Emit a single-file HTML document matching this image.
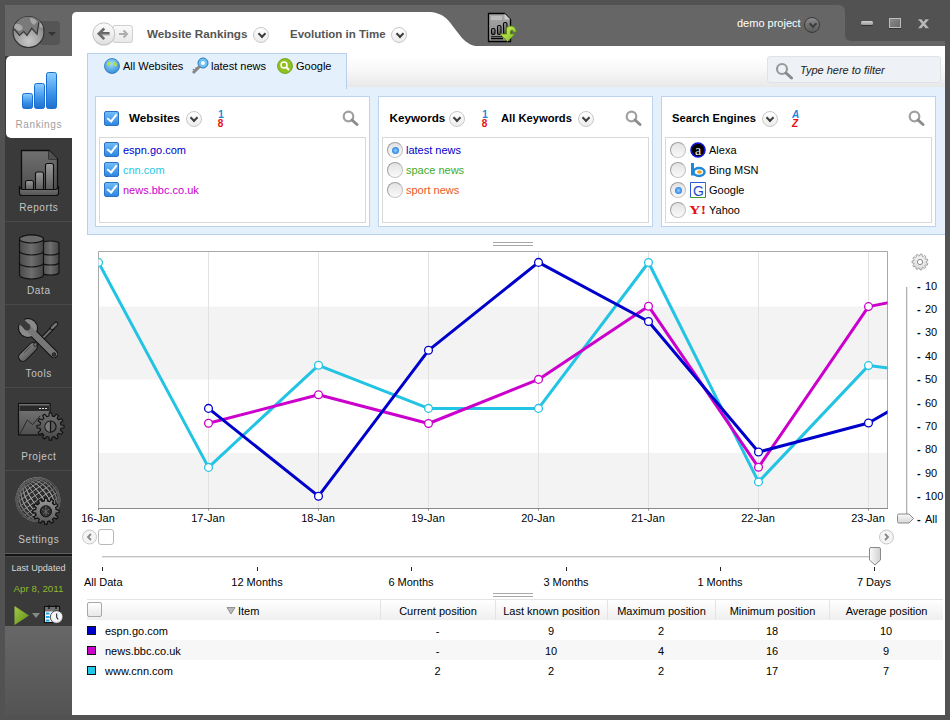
<!DOCTYPE html>
<html><head><meta charset="utf-8">
<style>
*{box-sizing:border-box;margin:0;padding:0}
html,body{width:950px;height:720px;overflow:hidden;background:#525252;font-family:"Liberation Sans",sans-serif;font-size:11px;color:#000}
.a{position:absolute}
.t{position:absolute;white-space:nowrap;line-height:14px}
.b{font-weight:bold}
.dd{position:absolute;width:16px;height:16px;border-radius:50%;border:1px solid #c8c8c8;background:linear-gradient(#fff,#ececec)}
.dd:after{content:"";position:absolute;left:4.6px;top:3px;width:4px;height:4px;border-right:2.2px solid #3e3e3e;border-bottom:2.2px solid #3e3e3e;transform:rotate(45deg)}
.side{position:absolute;left:5px;width:67px;text-align:center;color:#c4c4c4;font-size:10px;letter-spacing:0.6px;line-height:14px;text-indent:0.6px}
.sep{position:absolute;left:5px;width:67px;height:1px;background:#4a4a4a}
.panel{position:absolute;top:96px;height:131px;background:#fff;border:1px solid #bcd2ee}
.list{position:absolute;background:#fff;border:1px solid #d8d8d8}
.cb{position:absolute;width:15px;height:15px;border-radius:2px;background:linear-gradient(#72bdf8,#2d86e0);border:1px solid #2a72c8}
.cb:after{content:"";position:absolute;left:3.6px;top:0.2px;width:4px;height:8px;border-right:2.6px solid #fff;border-bottom:2.3px solid #fff;transform:rotate(38deg)}
.rb{position:absolute;width:16px;height:16px;border-radius:50%;border:1px solid #a0a0a0;border-bottom-color:#c8c8c8;border-right-color:#c0c0c0;background:linear-gradient(#e2e2e2,#fafafa)}
.rb.on:after{content:"";position:absolute;left:3.5px;top:3.5px;width:7px;height:7px;border-radius:50%;background:radial-gradient(circle,#9ad0ff 0,#3a8ee8 60%,#2f7fd8 100%)}
.srch{position:absolute}
.ylab{position:absolute;left:917px;font-weight:normal;font-size:11px;line-height:12px;white-space:nowrap}
.xlab{position:absolute;top:512px;font-size:11px;line-height:12px;white-space:nowrap;transform:translateX(-50%)}
.th{position:absolute;top:600px;height:20px;line-height:22px;text-align:center;font-size:11px;border-left:1px solid #e4e4e4}
.td{position:absolute;height:20px;line-height:22px;text-align:center;font-size:11px}
</style></head><body>
<!-- top gray bar -->
<div class="a" style="left:5px;top:5px;width:840px;height:51px;background:#666;border-top-right-radius:6px"></div>
<div class="a" style="left:840px;top:30px;width:105px;height:26px;background:#666"></div>
<div class="a" style="left:845px;top:5px;width:105px;height:36px;background:#525252;border-bottom-left-radius:6px"></div>
<!-- sidebar -->
<div class="a" style="left:5px;top:56px;width:67px;height:570px;background:#3a3a3a"></div>
<div class="a" style="left:5px;top:626px;width:67px;height:89px;background:linear-gradient(#676767,#545454)"></div>
<!-- main white panel -->
<div class="a" style="left:72px;top:46px;width:873px;height:669px;background:#fff"></div>
<svg class="a" style="left:0;top:0" width="950" height="60">
<path d="M72,47 L72,17 Q72,12 77,12 L427,12 C444,12 448,20 455,29 C462,38 467,47 484,47 Z" fill="#fff"/>
</svg>
<!-- header nav -->
<svg class="a" style="left:88px;top:18px" width="50" height="32" viewBox="88 18 50 32">
<defs>
<linearGradient id="gb" x1="0" y1="0" x2="0" y2="1"><stop offset="0" stop-color="#fdfdfd"/><stop offset="1" stop-color="#e0e0e0"/></linearGradient>
<linearGradient id="gf" x1="0" y1="0" x2="0" y2="1"><stop offset="0" stop-color="#fafafa"/><stop offset="1" stop-color="#e8e8e8"/></linearGradient>
<linearGradient id="garr" x1="0" y1="0" x2="0" y2="1"><stop offset="0" stop-color="#4a4a4a"/><stop offset="1" stop-color="#9a9a9a"/></linearGradient>
</defs>
<rect x="112.5" y="25.5" width="20" height="17" rx="2.5" fill="url(#gf)" stroke="#cfcfcf"/>
<path d="M119,34 h7.5 M123.5,30.5 l3.5,3.5 l-3.5,3.5" stroke="#adadad" stroke-width="2" fill="none"/>
<circle cx="103.8" cy="34.6" r="11" fill="#b0b0b0" opacity="0.6"/>
<circle cx="103.8" cy="33.8" r="11" fill="url(#gb)" stroke="#c4c4c4" stroke-width="1"/>
<path d="M99,33 h10.6" stroke="#3e3e3e" stroke-width="1.6"/><path d="M99,34.6 h10.6" stroke="#9a9a9a" stroke-width="1.6"/>
<path d="M104.3,28.5 l-5.5,5.3 l5.5,5.3" stroke="#6a6a6a" stroke-width="2.6" fill="none"/>
</svg>
<div class="t b" style="left:147px;top:27px;font-size:11.7px;color:#555">Website Rankings</div>
<div class="dd" style="left:253px;top:27px"></div>
<div class="t b" style="left:290px;top:27px;font-size:11.5px;color:#555">Evolution in Time</div>
<div class="dd" style="left:391px;top:27px"></div>
<!-- report download icon -->
<svg class="a" style="left:480px;top:8px" width="45" height="40">
<defs><linearGradient id="gr" x1="0" y1="0" x2="0" y2="1"><stop offset="0" stop-color="#a8a8a8"/><stop offset="1" stop-color="#8a8a8a"/></linearGradient>
<linearGradient id="grb" x1="0" y1="0" x2="0" y2="1"><stop offset="0" stop-color="#9a9a9a"/><stop offset="1" stop-color="#4a4a4a"/></linearGradient>
<linearGradient id="gg" x1="0" y1="0" x2="1" y2="1"><stop offset="0" stop-color="#d8f870"/><stop offset="1" stop-color="#7ab81a"/></linearGradient></defs>
<path d="M8.5,5.5 h16 l6,6 v22 h-22 z" fill="url(#gr)" stroke="#000" stroke-width="1.3"/>
<path d="M24.5,5.5 l6,6 h-6 z" fill="#ccc"/>
<rect x="11" y="8" width="11" height="4" fill="#bdbdbd"/>
<rect x="11.5" y="20.5" width="3.5" height="6" rx="1.5" fill="url(#grb)" stroke="#000" stroke-width="1.1"/>
<rect x="17.5" y="17.5" width="3.5" height="9" rx="1.5" fill="url(#grb)" stroke="#000" stroke-width="1.1"/>
<rect x="23.5" y="14.5" width="3.5" height="12" rx="1.5" fill="url(#grb)" stroke="#000" stroke-width="1.1"/>
<path d="M11,28.7 h14 M11,30.6 h12" stroke="#000" stroke-width="1.1"/>
<path d="M26.5,26 v-5 q0,-3 4,-3 q4,0 5,3 l1,3 h-3 l-1,-2 q-2,0 -2,2 v2 h4.5 l-7.5,7.5 l-7.5,-7.5 z" fill="url(#gg)" stroke="#5a8a10" stroke-width="0.8"/>
</svg>
<!-- demo project -->
<div class="t" style="left:737px;top:16px;font-size:11px;color:#fff">demo project</div>
<div class="dd" style="left:804px;top:17px;border-color:#3a3a3a;background:linear-gradient(#8a8a8a,#5a5a5a)"></div>
<!-- window controls -->
<div class="a" style="left:861px;top:21px;width:12px;height:4px;border-radius:1.5px;background:linear-gradient(#d0d0d0,#9a9a9a);box-shadow:0 1px 0 #333"></div>
<div class="a" style="left:889px;top:18px;width:12px;height:10px;background:linear-gradient(135deg,#8a8a8a,#6a6a6a);border:1px solid #bdbdbd;box-shadow:0 1px 0 #333"></div>
<svg class="a" style="left:916px;top:17px" width="15" height="14"><path d="M1.5,2 h4 l2,2.5 l2,-2.5 h4 l-4,4.8 l4,4.8 h-4 l-2,-2.5 l-2,2.5 h-4 l4,-4.8 z" fill="#b8b8b8" stroke="#3a3a3a" stroke-width="0.4"/></svg>
<!-- logo -->
<div class="a" style="left:39px;top:21px;width:21px;height:24px;border-radius:4px;background:#555"></div>
<div class="a" style="left:48px;top:32px;width:0;height:0;border-left:4.5px solid transparent;border-right:4.5px solid transparent;border-top:4.5px solid #333"></div>
<svg class="a" style="left:11px;top:15px" width="36" height="36">
<defs><radialGradient id="glb" cx="0.5" cy="0.8" r="0.6"><stop offset="0" stop-color="#c8c8c8"/><stop offset="1" stop-color="#8a8a8a"/></radialGradient>
<clipPath id="gclip"><circle cx="17.5" cy="17" r="15.3"/></clipPath></defs>
<circle cx="17.5" cy="17" r="15.5" fill="url(#glb)" stroke="#333" stroke-width="1.2"/>
<g clip-path="url(#gclip)">
<path d="M0,0 H36 V10 L28,6.5 L26,19.1 L20.7,13.4 L16,20.4 L12.8,16.6 L8.4,20.4 L3.3,14 L0,14 Z" fill="#7a7a7a"/>
<path d="M2,10 q5,-3 9,1 q2,4 -3,5 q-4,-1 -6,-6 z M19,3 q5,0 7,4 l-3,3 q-4,-2 -4,-7 z M27,4 q6,2 8,10 l-6,-2 z" fill="#a8a8a8"/>
<path d="M3.3,14 L8.4,20.4 L12.8,16.6 L16,20.4 L20.7,13.4 L26,19.1 L28,6.5" fill="none" stroke="#3a3a3a" stroke-width="1.3"/>
</g>
</svg>
<!-- toolbar strip -->
<div class="a" style="left:347px;top:53px;width:598px;height:34px;background:linear-gradient(#fff 10%,#f8f8f8 50%,#e8e8e8)"></div>
<!-- blue container -->
<div class="a" style="left:87px;top:87px;width:858px;height:148px;background:#e4f0fc;border:1px solid #b9cfee;border-right:0;border-top-color:#e4f0fc"></div>
<div class="a" style="left:87px;top:53px;width:260px;height:36px;background:#e4f0fc;border:1px solid #b9cfee;border-bottom:0;border-radius:1px 1px 0 0"></div>
<!-- filter box -->
<div class="a" style="left:767px;top:56px;width:174px;height:27px;background:#eef1f5;border:1px solid #dfe3e8;border-radius:3px"></div>
<svg class="a" style="left:775px;top:62px" width="20" height="18"><circle cx="7" cy="7" r="5" fill="none" stroke="#9a9a9a" stroke-width="2.2"/><path d="M11,11 L16.5,16" stroke="#8a8a8a" stroke-width="3" stroke-linecap="round"/></svg>
<div class="t" style="left:800px;top:63px;font-style:italic;font-size:11px;color:#222">Type here to filter</div>
<!-- tab items -->
<svg class="a" style="left:104px;top:58px" width="16" height="16"><defs><radialGradient id="gl" cx="0.45" cy="0.35" r="0.7"><stop offset="0" stop-color="#9fe0ff"/><stop offset="1" stop-color="#2e86d4"/></radialGradient></defs><circle cx="8" cy="8" r="7.5" fill="url(#gl)" stroke="#2a74b8" stroke-width="0.8"/><path d="M3,5 q2,-2 4,0 q-1,3 -3,3 z M9,3 q4,1 4,5 q-2,1 -3,-1 z" fill="#b6e23a"/></svg>
<div class="t" style="left:123px;top:59px;font-size:11px">All Websites</div>
<svg class="a" style="left:191px;top:57px" width="18" height="18"><circle cx="12" cy="6" r="5" fill="#6cc3f5" stroke="#2c78b8"/><circle cx="12" cy="6" r="2" fill="#fff"/><path d="M9,9 L2,16" stroke="#888" stroke-width="3"/><path d="M4,14 l-2,-2 M6,12 l-1.5,-1.5" stroke="#888" stroke-width="1.5"/></svg>
<div class="t" style="left:211px;top:59px;font-size:11px">latest news</div>
<svg class="a" style="left:277px;top:58px" width="16" height="16"><circle cx="8" cy="8" r="7.5" fill="#8fc21e" stroke="#6a9a14" stroke-width="0.8"/><circle cx="7" cy="7" r="3" fill="none" stroke="#fff" stroke-width="1.5"/><path d="M9,9 l3,3" stroke="#fff" stroke-width="2"/></svg>
<div class="t" style="left:296px;top:59px;font-size:11px">Google</div>

<!-- panels -->
<div class="panel" style="left:95px;width:275px"></div>
<div class="list" style="left:99px;top:137px;width:267px;height:86px"></div>
<div class="panel" style="left:378px;width:275px"></div>
<div class="list" style="left:382px;top:137px;width:267px;height:86px"></div>
<div class="panel" style="left:661px;width:275px"></div>
<div class="list" style="left:665px;top:137px;width:267px;height:86px"></div>

<!-- sort icon svg defs -->
<svg width="0" height="0" style="position:absolute">
<defs>
<g id="mag"><circle cx="6.5" cy="6.5" r="4.8" fill="none" stroke="#a0a0a0" stroke-width="2.2"/><path d="M10,10 L15,14.5" stroke="#8c8c8c" stroke-width="3" stroke-linecap="round"/></g>
</defs></svg>

<!-- Websites panel -->
<div class="cb" style="left:104px;top:111px"></div>
<div class="t b" style="left:129px;top:111px;font-size:11.7px">Websites</div>
<div class="dd" style="left:185.5px;top:111px"></div>
<div class="t b" style="left:216px;top:109.5px;font-size:10px;line-height:10px;color:#1a86e0;width:8px;text-align:center;margin-left:1px">1</div>
<div class="t b" style="left:216px;top:118.5px;font-size:10px;line-height:10px;color:#e81010;width:8px;text-align:center;margin-left:0.5px">8</div>
<svg class="a" style="left:341.5px;top:110px" width="18" height="17"><use href="#mag"/></svg>
<div class="cb" style="left:104px;top:142px"></div>
<div class="t" style="left:123px;top:143px;color:#0000cc">espn.go.com</div>
<div class="cb" style="left:104px;top:162px"></div>
<div class="t" style="left:123px;top:163px;color:#22c8e2">cnn.com</div>
<div class="cb" style="left:104px;top:182px"></div>
<div class="t" style="left:123px;top:183px;color:#cc00cc">news.bbc.co.uk</div>

<!-- Keywords panel -->
<div class="t b" style="left:389.5px;top:111px;font-size:11.7px">Keywords</div>
<div class="dd" style="left:448.5px;top:111px"></div>
<div class="t b" style="left:480px;top:109.5px;font-size:10px;line-height:10px;color:#1a86e0;width:8px;text-align:center;margin-left:1px">1</div>
<div class="t b" style="left:480px;top:118.5px;font-size:10px;line-height:10px;color:#e81010;width:8px;text-align:center;margin-left:0.5px">8</div>
<div class="t b" style="left:501px;top:111px;font-size:11.2px">All Keywords</div>
<div class="dd" style="left:577.5px;top:111px"></div>
<svg class="a" style="left:624.5px;top:110px" width="18" height="17"><use href="#mag"/></svg>
<div class="rb on" style="left:387px;top:142px"></div>
<div class="t" style="left:406px;top:143px;color:#0000cc">latest news</div>
<div class="rb" style="left:387px;top:162px"></div>
<div class="t" style="left:406px;top:163px;color:#3eab2a">space news</div>
<div class="rb" style="left:387px;top:182px"></div>
<div class="t" style="left:406px;top:183px;color:#e8581e">sport news</div>

<!-- Search Engines panel -->
<div class="t b" style="left:672px;top:111px;font-size:11.2px">Search Engines</div>
<div class="dd" style="left:761.5px;top:111px"></div>
<div class="t b" style="left:792px;top:109.5px;font-size:10px;line-height:10px;color:#1a86e0;font-style:italic">A</div>
<div class="t b" style="left:792px;top:118.5px;font-size:10px;line-height:10px;color:#e81010;font-style:italic">Z</div>
<svg class="a" style="left:907.5px;top:110px" width="18" height="17"><use href="#mag"/></svg>
<div class="rb" style="left:670px;top:142px"></div>
<div class="rb" style="left:670px;top:162px"></div>
<div class="rb on" style="left:670px;top:182px"></div>
<div class="rb" style="left:670px;top:202px"></div>
<svg class="a" style="left:690px;top:142px" width="16" height="16"><circle cx="8" cy="8" r="7" fill="#000" stroke="#1414d8" stroke-width="1.6"/><text x="8" y="12.5" font-family="Liberation Serif" font-size="14" fill="#eee" text-anchor="middle">a</text></svg>
<div class="t" style="left:709px;top:143px">Alexa</div>
<svg class="a" style="left:690px;top:162px" width="16" height="16"><path d="M2.5,1 v12.5" stroke="#1e88d8" stroke-width="3"/><ellipse cx="9" cy="10" rx="5.5" ry="4" fill="none" stroke="#1e88d8" stroke-width="2.5"/><ellipse cx="9.5" cy="10" rx="2.5" ry="1.8" fill="#f7a11a"/></svg>
<div class="t" style="left:709px;top:163px">Bing MSN</div>
<svg class="a" style="left:690px;top:182px" width="16" height="16"><rect x="0.5" y="0.5" width="15" height="15" fill="#fff"/><path d="M0.5,15.5 V0.5 H15.5" stroke="#2a5ad8" fill="none"/><path d="M15.5,0.5 V15.5" stroke="#e03a2a"/><path d="M0.5,15.5 H15.5" stroke="#3aa02a"/><text x="8.5" y="13.5" font-family="Liberation Sans" font-size="14" fill="#1a4ec8" text-anchor="middle">G</text></svg>
<div class="t" style="left:709px;top:183px">Google</div>
<svg class="a" style="left:689px;top:203px" width="19" height="14"><text x="0" y="11" font-family="Liberation Serif" font-size="12" font-weight="bold" fill="#e0141a" textLength="17" lengthAdjust="spacingAndGlyphs">Y!</text></svg>
<div class="t" style="left:709px;top:203px">Yahoo</div>

<!-- sidebar items -->
<div class="a" style="left:6px;top:56px;width:66px;height:82px;background:#fff;border-radius:5px 0 0 5px"></div>
<svg class="a" style="left:20px;top:70px" width="40" height="40">
<defs><linearGradient id="gbar" x1="0" y1="0" x2="0" y2="1"><stop offset="0" stop-color="#8fd0ff"/><stop offset="0.6" stop-color="#3a92e8"/><stop offset="1" stop-color="#1d6fd0"/></linearGradient></defs>
<rect x="2.5" y="23.5" width="10" height="15" rx="2" fill="url(#gbar)" stroke="#1a6ed0"/>
<rect x="14.5" y="13.5" width="10" height="25" rx="2" fill="url(#gbar)" stroke="#1a6ed0"/>
<rect x="26.5" y="2.5" width="10" height="36" rx="2" fill="url(#gbar)" stroke="#1a6ed0"/>
</svg>
<div class="side" style="top:118px;color:#a0a0a0">Rankings</div>

<div class="sep" style="top:221px"></div>
<div class="sep" style="top:304px"></div>
<div class="sep" style="top:387px"></div>
<div class="sep" style="top:470px"></div>
<div class="a" style="left:5px;top:553px;width:67px;height:1px;background:#606060"></div><div class="a" style="left:5px;top:554px;width:67px;height:2px;background:#151515"></div><div class="a" style="left:5px;top:556px;width:67px;height:1px;background:#4a4a4a"></div>

<svg class="a" style="left:0;top:140px" width="72" height="60" viewBox="0 140 72 60">
<defs><linearGradient id="gdoc" x1="0" y1="0" x2="0" y2="1"><stop offset="0" stop-color="#707070"/><stop offset="1" stop-color="#4e4e4e"/></linearGradient>
<linearGradient id="gbr" x1="0" y1="0" x2="0" y2="1"><stop offset="0" stop-color="#9a9a9a"/><stop offset="1" stop-color="#5a5a5a"/></linearGradient>
<linearGradient id="gtray" x1="0" y1="0" x2="0" y2="1"><stop offset="0" stop-color="#7a7a7a"/><stop offset="1" stop-color="#555"/></linearGradient></defs>
<path d="M21.5,150.5 h27.5 l8.5,8.5 v31 h-36 z" fill="url(#gdoc)" stroke="#0e0e0e" stroke-width="1.3"/>
<path d="M49,150.5 v8.5 h8.5" fill="#444" stroke="#0e0e0e" stroke-width="1.1"/>
<path d="M49,150.5 l8.5,8.5 h-8.5 z" fill="#505050"/>
<rect x="25.5" y="180.5" width="8" height="10" rx="2" fill="url(#gbr)" stroke="#0e0e0e" stroke-width="1.1"/>
<rect x="35.5" y="172" width="8" height="18.5" rx="2" fill="url(#gbr)" stroke="#0e0e0e" stroke-width="1.1"/>
<rect x="45.5" y="163.5" width="8" height="27" rx="2" fill="url(#gbr)" stroke="#0e0e0e" stroke-width="1.1"/>
<path d="M19.5,186 q0,3 3,3.5 h33 q3,-0.5 3,-3.5 v7 a2.5,2.5 0 0 1 -2.5,2.5 h-34 a2.5,2.5 0 0 1 -2.5,-2.5 z" fill="url(#gtray)" stroke="#0e0e0e" stroke-width="1.2"/>
</svg>
<div class="side" style="top:201px">Reports</div>

<svg class="a" style="left:18px;top:233px" width="44" height="48">
<defs><linearGradient id="gdb" x1="0" y1="0" x2="1" y2="0"><stop offset="0" stop-color="#4a4a4a"/><stop offset="0.5" stop-color="#6e6e6e"/><stop offset="1" stop-color="#444"/></linearGradient></defs>
<g stroke="#111" stroke-width="1.1">
<g transform="translate(0,2)"><path d="M24,8 a9,3 0 0 1 17,0 v30 a9,3 0 0 1 -17,0 z" fill="url(#gdb)"/>
<path d="M24,18 a9,3 0 0 0 17,0 M24,28 a9,3 0 0 0 17,0" fill="none"/></g><g transform="translate(0,1)">
<path d="M1.5,5 a12,4 0 0 1 24,0 v36 a12,4 0 0 1 -24,0 z" fill="url(#gdb)"/>
<ellipse cx="13.5" cy="5" rx="12" ry="4" fill="#6a6a6a"/>
<path d="M1.5,17 a12,4 0 0 0 24,0 M1.5,29 a12,4 0 0 0 24,0" fill="none"/>
</g></g>
</svg>
<div class="side" style="top:284px">Data</div>

<svg class="a" style="left:14px;top:314px" width="50" height="50">
<defs>
<mask id="jaw"><rect width="50" height="50" fill="#fff"/><path d="M4,4 L12.5,12.5" stroke="#000" stroke-width="6.5" stroke-linecap="butt"/><circle cx="13" cy="13" r="3.4" fill="#000"/></mask>
<linearGradient id="gtl" x1="0" y1="0" x2="1" y2="1"><stop offset="0" stop-color="#8a8a8a"/><stop offset="1" stop-color="#555"/></linearGradient>
</defs>
<g stroke-linecap="round">
<path d="M26,27 L39,13.5" stroke="#111" stroke-width="4"/>
<path d="M26,27 L39,13.5" stroke="#6a6a6a" stroke-width="2.2"/>
<path d="M38,14 L42,10" stroke="#111" stroke-width="4.5"/>
<path d="M38,14 L42,10" stroke="#777" stroke-width="2.5"/>
<path d="M9,43 L19,33" stroke="#111" stroke-width="9.5"/>
<path d="M9,43 L19,33" stroke="url(#gtl)" stroke-width="7.5"/>
<path d="M10.5,38.5 L16.5,32.5" stroke="#4a4a4a" stroke-width="1"/>
<circle cx="21.5" cy="30.5" r="1.8" fill="#777" stroke="#111" stroke-width="0.8"/>
</g>
<g mask="url(#jaw)">
<circle cx="14" cy="14" r="10" fill="#111"/>
<path d="M16,16 L40,40" stroke="#111" stroke-width="8.5" stroke-linecap="round"/>
<circle cx="14" cy="14" r="9" fill="#8a8a8a"/>
<path d="M16,16 L40,40" stroke="#777" stroke-width="6.5" stroke-linecap="round"/>
</g>
<circle cx="40" cy="40.5" r="1.8" fill="#3a3a3a" stroke="#111" stroke-width="0.8"/>
</svg>
<div class="side" style="top:367px">Tools</div>

<svg class="a" style="left:0;top:396px" width="72" height="50" viewBox="0 396 72 50">
<defs><linearGradient id="gwin" x1="0" y1="0" x2="0" y2="1"><stop offset="0" stop-color="#7a7a7a"/><stop offset="1" stop-color="#4e4e4e"/></linearGradient>
<linearGradient id="ggr" x1="0" y1="0" x2="0" y2="1"><stop offset="0" stop-color="#6e6e6e"/><stop offset="1" stop-color="#4a4a4a"/></linearGradient></defs>
<rect x="18.5" y="403.5" width="31.5" height="31.5" fill="url(#gwin)" stroke="#111" stroke-width="1.2"/>
<rect x="19.5" y="405.5" width="29.5" height="5.5" fill="#2a2a2a"/>
<path d="M39,408.5 h2 M42,408.5 h2 M45,408.5 h2" stroke="#ddd" stroke-width="1.2"/>
<path d="M20,434 L27.3,420 L32.7,424.6 L40,416" stroke="#222" stroke-width="0.9" fill="none"/>
<path d="M60.97,424.94 L64.05,425.39 L64.05,427.81 L60.97,428.26 L60.40,430.40 L62.84,432.33 L61.63,434.42 L58.74,433.27 L57.17,434.84 L58.32,437.73 L56.23,438.94 L54.30,436.50 L52.16,437.07 L51.71,440.15 L49.29,440.15 L48.84,437.07 L46.70,436.50 L44.77,438.94 L42.68,437.73 L43.83,434.84 L42.26,433.27 L39.37,434.42 L38.16,432.33 L40.60,430.40 L40.03,428.26 L36.95,427.81 L36.95,425.39 L40.03,424.94 L40.60,422.80 L38.16,420.87 L39.37,418.78 L42.26,419.93 L43.83,418.36 L42.68,415.47 L44.77,414.26 L46.70,416.70 L48.84,416.13 L49.29,413.05 L51.71,413.05 L52.16,416.13 L54.30,416.70 L56.23,414.26 L58.32,415.47 L57.17,418.36 L58.74,419.93 L61.63,418.78 L62.84,420.87 L60.40,422.80Z" fill="url(#ggr)" stroke="#111" stroke-width="1.1"/>
<circle cx="50.5" cy="426.6" r="5.6" fill="#5a5a5a" stroke="#111" stroke-width="1.1"/>
<path d="M45.3,426.6 a5.2,5.2 0 0 1 5.2,-5.2 v10.4 a5.2,5.2 0 0 1 -5.2,-5.2" fill="#7a7a7a"/>
<path d="M50.5,421 v11.2" stroke="#111" stroke-width="1.2"/>
</svg>
<div class="side" style="top:450px">Project</div>

<svg class="a" style="left:0;top:470px" width="72" height="70" viewBox="0 470 72 70">
<defs><radialGradient id="gglobe" cx="0.5" cy="0.5" r="0.5"><stop offset="0.6" stop-color="#3a3a3a" stop-opacity="0"/><stop offset="1" stop-color="#3a3a3a" stop-opacity="0.8"/></radialGradient>
<linearGradient id="ggr2" x1="0" y1="0" x2="0" y2="1"><stop offset="0" stop-color="#9a9a9a"/><stop offset="1" stop-color="#555"/></linearGradient>
<clipPath id="sph"><circle cx="38" cy="499.7" r="22.5"/></clipPath></defs>
<circle cx="38" cy="499.7" r="22.5" fill="#2e2e2e"/>
<g clip-path="url(#sph)" transform="rotate(-35 38 499.7)" fill="none" stroke="#a0a0a0" stroke-width="0.9">
<ellipse cx="38" cy="499.7" rx="21.94" ry="22.5"/><ellipse cx="38" cy="499.7" rx="20.27" ry="22.5"/><ellipse cx="38" cy="499.7" rx="17.59" ry="22.5"/><ellipse cx="38" cy="499.7" rx="14.03" ry="22.5"/><ellipse cx="38" cy="499.7" rx="9.76" ry="22.5"/><ellipse cx="38" cy="499.7" rx="5.01" ry="22.5"/><path d="M38,477.2 V522.2"/><ellipse cx="38" cy="499.7" rx="5.01" ry="22.5"/><ellipse cx="38" cy="499.7" rx="9.76" ry="22.5"/><ellipse cx="38" cy="499.7" rx="14.03" ry="22.5"/><ellipse cx="38" cy="499.7" rx="17.59" ry="22.5"/><ellipse cx="38" cy="499.7" rx="20.27" ry="22.5"/><ellipse cx="38" cy="499.7" rx="21.94" ry="22.5"/><path d="M32.99,477.76 H43.01"/><path d="M28.24,479.43 H47.76"/><path d="M23.97,482.11 H52.03"/><path d="M20.41,485.67 H55.59"/><path d="M17.73,489.94 H58.27"/><path d="M16.06,494.69 H59.94"/><path d="M15.50,499.70 H60.50"/><path d="M16.06,504.71 H59.94"/><path d="M17.73,509.46 H58.27"/><path d="M20.41,513.73 H55.59"/><path d="M23.97,517.29 H52.03"/><path d="M28.24,519.97 H47.76"/><path d="M32.99,521.64 H43.01"/>
</g>
<circle cx="38" cy="499.7" r="22.5" fill="url(#gglobe)"/>
<path d="M56.17,509.67 L59.05,510.13 L59.05,512.47 L56.17,512.93 L55.61,515.03 L57.87,516.86 L56.70,518.89 L53.98,517.84 L52.44,519.38 L53.49,522.10 L51.46,523.27 L49.63,521.01 L47.53,521.57 L47.07,524.45 L44.73,524.45 L44.27,521.57 L42.17,521.01 L40.34,523.27 L38.31,522.10 L39.36,519.38 L37.82,517.84 L35.10,518.89 L33.93,516.86 L36.19,515.03 L35.63,512.93 L32.75,512.47 L32.75,510.13 L35.63,509.67 L36.19,507.57 L33.93,505.74 L35.10,503.71 L37.82,504.76 L39.36,503.22 L38.31,500.50 L40.34,499.33 L42.17,501.59 L44.27,501.03 L44.73,498.15 L47.07,498.15 L47.53,501.03 L49.63,501.59 L51.46,499.33 L53.49,500.50 L52.44,503.22 L53.98,504.76 L56.70,503.71 L57.87,505.74 L55.61,507.57Z" fill="url(#ggr2)" stroke="#111" stroke-width="1.2"/>
<circle cx="45.9" cy="511.3" r="5.6" fill="#2e2e2e" stroke="#111" stroke-width="1"/>
<path d="M42,509 l7,5 M43,514 l6,-5 M45.9,506 v10" stroke="#777" stroke-width="0.8"/>
</svg>
<div class="side" style="top:533px">Settings</div>

<div class="side" style="top:561px;font-size:9.1px;letter-spacing:0;text-indent:0;color:#d8d8d8">Last Updated</div>
<div class="side" style="top:582px;font-size:9.8px;letter-spacing:0;text-indent:0;color:#8fb82e">Apr 8, 2011</div>
<svg class="a" style="left:13px;top:605px" width="18" height="21"><defs><linearGradient id="gplay" x1="0" y1="0" x2="1" y2="1"><stop offset="0" stop-color="#a4c84a"/><stop offset="1" stop-color="#5e8e18"/></linearGradient></defs><path d="M1.5,1 L16,10.5 L1.5,20 Z" fill="url(#gplay)"/></svg>
<div class="a" style="left:32px;top:613px;width:0;height:0;border-left:4px solid transparent;border-right:4px solid transparent;border-top:5px solid #888"></div>
<svg class="a" style="left:43px;top:603px" width="23" height="23">
<defs><radialGradient id="gclk" cx="0.35" cy="0.3" r="0.8"><stop offset="0" stop-color="#fff"/><stop offset="0.7" stop-color="#e8e8e8"/><stop offset="1" stop-color="#9a9a9a"/></radialGradient></defs>
<rect x="1.5" y="3.5" width="15" height="16" fill="#fff" stroke="#111" stroke-width="1.2"/>
<rect x="2" y="4" width="14" height="4.5" fill="#707070"/>
<path d="M6,2 v4 M13,2 v4" stroke="#111" stroke-width="1.4"/>
<rect x="3" y="9.5" width="3.5" height="2" fill="#18a8f0"/><rect x="3" y="13" width="3.5" height="2" fill="#18a8f0"/><rect x="3" y="16.5" width="3.5" height="2" fill="#18a8f0"/>
<circle cx="13.7" cy="14.1" r="6.4" fill="url(#gclk)" stroke="#222" stroke-width="0.8"/>
<circle cx="13.7" cy="14.1" r="4.3" fill="#f4f8fc"/>
<path d="M13.7,10.5 v3.8 l1.5,2.2" stroke="#222" stroke-width="1.1" fill="none"/>
</svg>

<!-- splitter -->
<div class="a" style="left:493px;top:242px;width:40px;height:1px;background:#a8a8a8"></div>
<div class="a" style="left:493px;top:245px;width:40px;height:1px;background:#a8a8a8"></div>
<svg class="a" style="left:0;top:0" width="950" height="720">
<defs><clipPath id="cp"><rect x="98.5" y="251.5" width="789" height="257"/></clipPath></defs>
<rect x="98" y="251" width="790" height="258" fill="#fff"/>
<rect x="98" y="306.5" width="790" height="73" fill="#f3f3f3"/>
<rect x="98" y="453" width="790" height="55" fill="#f3f3f3"/>
<path d="M208.5,252 V508" stroke="#e2e2e2" stroke-width="1"/>
<path d="M318.5,252 V508" stroke="#e2e2e2" stroke-width="1"/>
<path d="M428.5,252 V508" stroke="#e2e2e2" stroke-width="1"/>
<path d="M538.5,252 V508" stroke="#e2e2e2" stroke-width="1"/>
<path d="M648.5,252 V508" stroke="#e2e2e2" stroke-width="1"/>
<path d="M758.5,252 V508" stroke="#e2e2e2" stroke-width="1"/>
<path d="M868.5,252 V508" stroke="#e2e2e2" stroke-width="1"/>
<path d="M98.5,508 V251.5 H887.5 V508.5" fill="none" stroke="#a8a8a8" stroke-width="1"/>
<path d="M98,508.5 H888" stroke="#8a8a8a" stroke-width="1"/>
<path d="M98.5,508 V510.5" stroke="#8a8a8a" stroke-width="1"/>
<path d="M208.5,508 V510.5" stroke="#8a8a8a" stroke-width="1"/>
<path d="M318.5,508 V510.5" stroke="#8a8a8a" stroke-width="1"/>
<path d="M428.5,508 V510.5" stroke="#8a8a8a" stroke-width="1"/>
<path d="M538.5,508 V510.5" stroke="#8a8a8a" stroke-width="1"/>
<path d="M648.5,508 V510.5" stroke="#8a8a8a" stroke-width="1"/>
<path d="M758.5,508 V510.5" stroke="#8a8a8a" stroke-width="1"/>
<path d="M868.5,508 V510.5" stroke="#8a8a8a" stroke-width="1"/>
<g clip-path="url(#cp)">
<polyline points="98.5,262.5 208.5,467.4 318.5,365.3 428.5,408.4 538.5,408.4 648.5,262.5 758.5,481.9 868.5,365.6 978.5,379.5" fill="none" stroke="#22c3e3" stroke-width="3" stroke-linejoin="round"/>
<polyline points="208.5,423.3 318.5,394.7 428.5,423.5 538.5,379.4 648.5,306.2 758.5,467.3 868.5,306.6 978.5,285" fill="none" stroke="#cc00cc" stroke-width="3" stroke-linejoin="round"/>
<polyline points="208.5,408.4 318.5,496.2 428.5,350.3 538.5,262.4 648.5,321.5 758.5,452 868.5,423 978.5,359" fill="none" stroke="#0000cc" stroke-width="3" stroke-linejoin="round"/>
<circle cx="98.5" cy="262.5" r="3.9" fill="#fff" stroke="#22c3e3" stroke-width="1.3"/><circle cx="208.5" cy="467.4" r="3.9" fill="#fff" stroke="#22c3e3" stroke-width="1.3"/><circle cx="318.5" cy="365.3" r="3.9" fill="#fff" stroke="#22c3e3" stroke-width="1.3"/><circle cx="428.5" cy="408.4" r="3.9" fill="#fff" stroke="#22c3e3" stroke-width="1.3"/><circle cx="538.5" cy="408.4" r="3.9" fill="#fff" stroke="#22c3e3" stroke-width="1.3"/><circle cx="648.5" cy="262.5" r="3.9" fill="#fff" stroke="#22c3e3" stroke-width="1.3"/><circle cx="758.5" cy="481.9" r="3.9" fill="#fff" stroke="#22c3e3" stroke-width="1.3"/><circle cx="868.5" cy="365.6" r="3.9" fill="#fff" stroke="#22c3e3" stroke-width="1.3"/>
<circle cx="208.5" cy="423.3" r="3.9" fill="#fff" stroke="#cc00cc" stroke-width="1.3"/><circle cx="318.5" cy="394.7" r="3.9" fill="#fff" stroke="#cc00cc" stroke-width="1.3"/><circle cx="428.5" cy="423.5" r="3.9" fill="#fff" stroke="#cc00cc" stroke-width="1.3"/><circle cx="538.5" cy="379.4" r="3.9" fill="#fff" stroke="#cc00cc" stroke-width="1.3"/><circle cx="648.5" cy="306.2" r="3.9" fill="#fff" stroke="#cc00cc" stroke-width="1.3"/><circle cx="758.5" cy="467.3" r="3.9" fill="#fff" stroke="#cc00cc" stroke-width="1.3"/><circle cx="868.5" cy="306.6" r="3.9" fill="#fff" stroke="#cc00cc" stroke-width="1.3"/>
<circle cx="208.5" cy="408.4" r="3.9" fill="#fff" stroke="#0000cc" stroke-width="1.3"/><circle cx="318.5" cy="496.2" r="3.9" fill="#fff" stroke="#0000cc" stroke-width="1.3"/><circle cx="428.5" cy="350.3" r="3.9" fill="#fff" stroke="#0000cc" stroke-width="1.3"/><circle cx="538.5" cy="262.4" r="3.9" fill="#fff" stroke="#0000cc" stroke-width="1.3"/><circle cx="648.5" cy="321.5" r="3.9" fill="#fff" stroke="#0000cc" stroke-width="1.3"/><circle cx="758.5" cy="452" r="3.9" fill="#fff" stroke="#0000cc" stroke-width="1.3"/><circle cx="868.5" cy="423" r="3.9" fill="#fff" stroke="#0000cc" stroke-width="1.3"/>
</g>
</svg>
<!-- x labels -->
<div class="xlab" style="left:98px">16-Jan</div>
<div class="xlab" style="left:208px">17-Jan</div>
<div class="xlab" style="left:318px">18-Jan</div>
<div class="xlab" style="left:428px">19-Jan</div>
<div class="xlab" style="left:538px">20-Jan</div>
<div class="xlab" style="left:648px">21-Jan</div>
<div class="xlab" style="left:758px">22-Jan</div>
<div class="xlab" style="left:868px">23-Jan</div>
<!-- y slider -->
<svg class="a" style="left:910px;top:252px" width="20" height="20"><defs><linearGradient id="ggear" x1="0" y1="0" x2="0" y2="1"><stop offset="0" stop-color="#f4f4f4"/><stop offset="1" stop-color="#dedede"/></linearGradient></defs>
<path d="M16.17,10.65 L17.86,11.48 L17.32,13.22 L15.46,12.94 L14.83,13.88 L15.82,15.49 L14.42,16.67 L13.00,15.42 L11.97,15.88 L11.92,17.77 L10.11,18.00 L9.59,16.19 L8.47,16.01 L7.42,17.57 L5.77,16.79 L6.31,14.98 L5.47,14.23 L3.73,14.97 L2.77,13.43 L4.20,12.20 L3.90,11.11 L2.04,10.80 L2.07,8.97 L3.93,8.72 L4.27,7.63 L2.87,6.37 L3.88,4.85 L5.59,5.64 L6.46,4.91 L5.97,3.09 L7.64,2.36 L8.65,3.95 L9.77,3.80 L10.34,2.01 L12.14,2.29 L12.13,4.18 L13.16,4.66 L14.61,3.46 L15.97,4.68 L14.94,6.26 L15.54,7.22 L17.41,6.99 L17.90,8.75 L16.18,9.52Z" fill="url(#ggear)" stroke="#9a9a9a" stroke-width="0.9" stroke-linejoin="round"/><circle cx="10" cy="10" r="2.6" fill="#fff" stroke="#8a8a8a" stroke-width="1"/></svg>
<div class="a" style="left:906px;top:287px;width:1px;height:228px;background:#b0b0b0"></div>
<div class="a" style="left:907px;top:287px;width:1px;height:228px;background:#e8e8e8"></div>
<div class="ylab" style="top:280px;font-weight:bold">-</div><div class="ylab" style="left:925px;top:280px">10</div>
<div class="ylab" style="top:303px;font-weight:bold">-</div><div class="ylab" style="left:925px;top:303px">20</div>
<div class="ylab" style="top:326px;font-weight:bold">-</div><div class="ylab" style="left:925px;top:326px">30</div>
<div class="ylab" style="top:350px;font-weight:bold">-</div><div class="ylab" style="left:925px;top:350px">40</div>
<div class="ylab" style="top:373px;font-weight:bold">-</div><div class="ylab" style="left:925px;top:373px">50</div>
<div class="ylab" style="top:397px;font-weight:bold">-</div><div class="ylab" style="left:925px;top:397px">60</div>
<div class="ylab" style="top:420px;font-weight:bold">-</div><div class="ylab" style="left:925px;top:420px">70</div>
<div class="ylab" style="top:443px;font-weight:bold">-</div><div class="ylab" style="left:925px;top:443px">80</div>
<div class="ylab" style="top:467px;font-weight:bold">-</div><div class="ylab" style="left:925px;top:467px">90</div>
<div class="ylab" style="top:490px;font-weight:bold">-</div><div class="ylab" style="left:925px;top:490px">100</div>
<div class="ylab" style="top:513px;font-weight:bold">-</div><div class="ylab" style="left:925px;top:513px">All</div>
<svg class="a" style="left:896px;top:513px" width="20" height="12"><defs><linearGradient id="gh" x1="0" y1="0" x2="0" y2="1"><stop offset="0" stop-color="#fafafa"/><stop offset="1" stop-color="#d6d6d6"/></linearGradient></defs><path d="M1.5,2.5 a1.5,1.5 0 0 1 1.5,-1.5 h10 l4.5,4.5 l-4.5,4.5 h-10 a1.5,1.5 0 0 1 -1.5,-1.5 z" fill="url(#gh)" stroke="#8a8a8a"/></svg>
<!-- scroll -->
<svg class="a" style="left:81px;top:529px" width="16" height="16"><circle cx="8.5" cy="8" r="7" fill="#f4f4f4" stroke="#c8c8c8"/><path d="M10,5 l-3,3 l3,3" stroke="#888" stroke-width="1.8" fill="none"/></svg>
<div class="a" style="left:98px;top:529px;width:16px;height:16px;border:1px solid #b8b8b8;border-radius:3px;background:#fff"></div>
<svg class="a" style="left:879px;top:529px" width="16" height="16"><circle cx="7.5" cy="8" r="7" fill="#f4f4f4" stroke="#c8c8c8"/><path d="M6,5 l3,3 l-3,3" stroke="#888" stroke-width="1.8" fill="none"/></svg>
<!-- time slider -->
<div class="a" style="left:102px;top:556px;width:772px;height:1px;background:#c2c2c2"></div>
<div class="a" style="left:102px;top:557px;width:772px;height:1px;background:#e8e8e8"></div>
<svg class="a" style="left:868px;top:546px" width="14" height="20"><defs><linearGradient id="gth" x1="0" y1="0" x2="1" y2="0"><stop offset="0" stop-color="#fafafa"/><stop offset="1" stop-color="#d0d0d0"/></linearGradient></defs><path d="M1.5,3 a1.5,1.5 0 0 1 1.5,-1.5 h8 a1.5,1.5 0 0 1 1.5,1.5 v11 l-5.5,5 l-5.5,-5 z" fill="url(#gth)" stroke="#8a8a8a"/></svg>
<div class="a" style="left:102px;top:567px;width:1px;height:4px;background:#222"></div>
<div class="a" style="left:257px;top:567px;width:1px;height:4px;background:#222"></div>
<div class="a" style="left:411px;top:567px;width:1px;height:4px;background:#222"></div>
<div class="a" style="left:566px;top:567px;width:1px;height:4px;background:#222"></div>
<div class="a" style="left:720px;top:567px;width:1px;height:4px;background:#222"></div>
<div class="a" style="left:874px;top:567px;width:1px;height:4px;background:#222"></div>
<div class="t" style="left:84px;top:575px">All Data</div>
<div class="t" style="left:257px;top:575px;transform:translateX(-50%)">12 Months</div>
<div class="t" style="left:411px;top:575px;transform:translateX(-50%)">6 Months</div>
<div class="t" style="left:566px;top:575px;transform:translateX(-50%)">3 Months</div>
<div class="t" style="left:720px;top:575px;transform:translateX(-50%)">1 Months</div>
<div class="t" style="left:874px;top:575px;transform:translateX(-50%)">7 Days</div>
<!-- splitter 2 -->
<div class="a" style="left:493px;top:593px;width:40px;height:1px;background:#a8a8a8"></div>
<div class="a" style="left:493px;top:596px;width:40px;height:1px;background:#a8a8a8"></div>
<!-- table -->
<div class="a" style="left:87px;top:599px;width:856px;height:21px;border-top:1px solid #e4e4e4;background:linear-gradient(#fff,#efefef)"></div>
<div class="a" style="left:87px;top:602px;width:15px;height:15px;border:1px solid #a8a8a8;border-radius:2px;background:linear-gradient(#fff,#e8e8e8)"></div>
<svg class="a" style="left:226px;top:606px" width="10" height="9"><path d="M1,1.5 h8 l-4,6.5 z" fill="#b8b8b8" stroke="#8a8a8a" stroke-width="0.9"/></svg>

<div class="t" style="left:238px;top:604px">Item</div>
<div class="th" style="left:380px;width:115px">Current position</div>
<div class="th" style="left:495px;width:112px">Last known position</div>
<div class="th" style="left:607px;width:108px">Maximum position</div>
<div class="th" style="left:715px;width:114px">Minimum position</div>
<div class="th" style="left:829px;width:114px">Average position</div>
<div class="a" style="left:87px;top:640px;width:856px;height:20px;background:#f7f7f7"></div>
<div class="a" style="left:87px;top:626px;width:9px;height:9px;background:#0000cc;border:1px solid #111"></div>
<div class="a" style="left:87px;top:646px;width:9px;height:9px;background:#cc00cc;border:1px solid #111"></div>
<div class="a" style="left:87px;top:666px;width:9px;height:9px;background:#22c8e8;border:1px solid #111"></div>
<div class="t" style="left:105px;top:624px">espn.go.com</div>
<div class="t" style="left:105px;top:644px">news.bbc.co.uk</div>
<div class="t" style="left:105px;top:664px">www.cnn.com</div>
<div class="td" style="left:380px;top:620px;width:115px">-</div>
<div class="td" style="left:495px;top:620px;width:112px">9</div>
<div class="td" style="left:607px;top:620px;width:108px">2</div>
<div class="td" style="left:715px;top:620px;width:114px">18</div>
<div class="td" style="left:829px;top:620px;width:114px">10</div>
<div class="td" style="left:380px;top:640px;width:115px">-</div>
<div class="td" style="left:495px;top:640px;width:112px">10</div>
<div class="td" style="left:607px;top:640px;width:108px">4</div>
<div class="td" style="left:715px;top:640px;width:114px">16</div>
<div class="td" style="left:829px;top:640px;width:114px">9</div>
<div class="td" style="left:380px;top:660px;width:115px">2</div>
<div class="td" style="left:495px;top:660px;width:112px">2</div>
<div class="td" style="left:607px;top:660px;width:108px">2</div>
<div class="td" style="left:715px;top:660px;width:114px">17</div>
<div class="td" style="left:829px;top:660px;width:114px">7</div>

<div id="content"></div>
</body></html>
